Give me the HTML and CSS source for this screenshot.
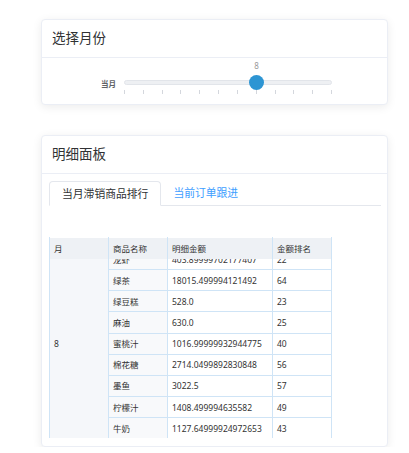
FILE: index.html
```html
<!doctype html>
<html>
<head>
    <meta charset="utf-8">
	<link rel="stylesheet" href="styles.css">
</head>
<body>
    <div class="page">
	    <div class="card">
		    <div class="card-head">选择月份</div>
			<div class="card-body slider-body">
			    <span class="slider-label">当月</span>
				<div class="slider">
				    <div class="track">
					    <span class="thumb"><span class="thumb-val">8</span></span>
					</div>
					<div class="ticks">
					    <i></i><i></i><i></i><i></i><i></i><i></i>
					    <i></i><i></i><i></i><i></i><i></i><i></i>
					</div>
				</div>
			</div>
		</div>

	    <div class="card card-detail">
		    <div class="card-head">明细面板</div>
			<div class="card-body">
			    <div class="tabs">
				    <span class="tab active">当月滞销商品排行</span>
				    <span class="tab">当前订单跟进</span>
					<span class="tab-rest"></span>
				</div>
				<div class="grid-wrap" id="grid">
				    <table class="grid">
					    <colgroup>
						    <col style="width:59px"><col style="width:59px"><col style="width:105px"><col style="width:59px">
						</colgroup>
					    <thead>
						    <tr><th>月</th><th>商品名称</th><th>明细金额</th><th>金额排名</th></tr>
						</thead>
						<tbody>
						    <tr><td class="month" rowspan="9">8</td><td class="name">龙虾</td><td>403.89999702177407</td><td>22</td></tr>
						    <tr><td class="name">绿茶</td><td>18015.499994121492</td><td>64</td></tr>
						    <tr><td class="name">绿豆糕</td><td>528.0</td><td>23</td></tr>
						    <tr><td class="name">麻油</td><td>630.0</td><td>25</td></tr>
						    <tr><td class="name">蜜桃汁</td><td>1016.99999932944775</td><td>40</td></tr>
						    <tr><td class="name">棉花糖</td><td>2714.0499892830848</td><td>56</td></tr>
						    <tr><td class="name">墨鱼</td><td>3022.5</td><td>57</td></tr>
						    <tr><td class="name">柠檬汁</td><td>1408.499994635582</td><td>49</td></tr>
						    <tr><td class="name">牛奶</td><td>1127.64999924972653</td><td>43</td></tr>
						</tbody>
					</table>
				</div>
			</div>
		</div>
	</div>

	<script>
	    //表格已经往下滚动了一点
	    document.getElementById("grid").scrollTop= 11;
	</script>
</body>
</html>
```

FILE: styles.css
```css
    *{
	    margin: 0;
		padding: 0;
		box-sizing: border-box;
	}
	body{
	    background: #fff;
		font-family: "Noto Sans", "Noto Sans CJK SC", sans-serif;
		color: #303133;
	}
	.page{
	    padding: 19px 21px 0 41px;
	}
	.card{
	    background: #fff;
		border: 1px solid #ebeef5;
		border-radius: 4px;
		box-shadow: 0 2px 10px rgba(0,0,0,.08);
	}
	.card-detail{
	    margin-top: 30px;
	}
	.card-head{
	    height: 38px;
		line-height: 36px;
		padding-left: 10px;
		font-size: 13.5px;
		border-bottom: 1px solid #ebeef5;
	}

	/* 滑块 */
	.slider-body{
	    height: 46px;
		display: flex;
		align-items: flex-start;
		padding: 22px 0 0 59px;
	}
	.slider-label{
	    width: 23px;
		font-size: 7.5px;
		font-weight: bold;
		color: #606266;
		line-height: 9px;
	}
	.slider{
	    width: 208px;
	}
	.track{
	    height: 5px;
		background: #eef0f3;
		border: 1px solid #e2e5ea;
		border-radius: 3px;
		position: relative;
	}
	.thumb{
	    position: absolute;
		left: 124px;
		top: -6px;
		width: 15px;
		height: 15px;
		border-radius: 50%;
		background: #2d95d3;
	}
	.thumb-val{
	    position: absolute;
		left: 0;
		width: 15px;
		top: -14px;
		text-align: center;
		font-size: 8px;
		color: #999;
		line-height: 10px;
	}
	.ticks{
	    display: flex;
		justify-content: space-between;
		margin-top: 5px;
	}
	.ticks i{
	    width: 1px;
		height: 4px;
		background: #d4d7dd;
	}

	/* 标签页 */
	.card-detail .card-body{
	    padding: 7px 6px 8px 7px;
	}
	.tabs{
	    display: flex;
		height: 25px;
	}
	.tab{
	    flex-shrink: 0;
		white-space: nowrap;
	    font-size: 10.8px;
		line-height: 24px;
		padding: 0 12px 0 12px;
		color: #409eff;
		border-bottom: 1px solid #e4e7ed;
	}
	.tab.active{
	    color: #303133;
		padding: 0 12px;
		border: 1px solid #e4e7ed;
		border-bottom-color: #fff;
		border-radius: 4px 4px 0 0;
	}
	.tab-rest{
	    flex: 1;
		border-bottom: 1px solid #e4e7ed;
	}

	/* 表格 */
	.grid-wrap{
	    margin-top: 31px;
		width: 283px;
		height: 201px;
		overflow: hidden;
	}
	.grid{
	    border-collapse: collapse;
		table-layout: fixed;
		width: 282px;
		font-size: 8.5px;
		line-height: 11px;
		color: #333;
	}
	.grid th{
	    position: sticky;
		top: 0;
		height: 22px;
		background: #eef1f5;
		font-weight: normal;
		text-align: left;
		padding: 0 4px;
		border: 1px solid #cfe4f6;
		border-top-color: #d9ebf9;
	}
	.grid td{
	    height: 21.15px;
		padding: 0 4px;
		border: 1px solid #cfe4f6;
		white-space: nowrap;
		overflow: hidden;
	}
	.grid td.month{
	    background: #f5f7fa;
		vertical-align: middle;
	}
	.grid td.name{
	    background: #f8f9fb;
	}
```
